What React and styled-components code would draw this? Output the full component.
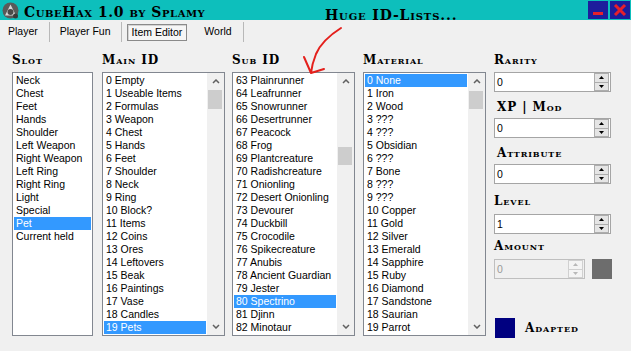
import React from "react";
import styled, { createGlobalStyle } from "styled-components";

const GlobalStyle = createGlobalStyle`
  html, body {
    margin: 0;
    padding: 0;
    background: #f0f0f0;
    overflow: hidden;
  }
`;

const slots = ["Neck", "Chest", "Feet", "Hands", "Shoulder", "Left Weapon", "Right Weapon", "Left Ring", "Right Ring", "Light", "Special", "Pet", "Current held"];

const mainIds = ["0 Empty", "1 Useable Items", "2 Formulas", "3 Weapon", "4 Chest", "5 Hands", "6 Feet", "7 Shoulder", "8 Neck", "9 Ring", "10 Block?", "11 Items", "12 Coins", "13 Ores", "14 Leftovers", "15 Beak", "16 Paintings", "17 Vase", "18 Candles", "19 Pets"];

const subIds = ["63 Plainrunner", "64 Leafrunner", "65 Snowrunner", "66 Desertrunner", "67 Peacock", "68 Frog", "69 Plantcreature", "70 Radishcreature", "71 Onionling", "72 Desert Onionling", "73 Devourer", "74 Duckbill", "75 Crocodile", "76 Spikecreature", "77 Anubis", "78 Ancient Guardian", "79 Jester", "80 Spectrino", "81 Djinn", "82 Minotaur"];

const materials = ["0 None", "1 Iron", "2 Wood", "3 ???", "4 ???", "5 Obsidian", "6 ???", "7 Bone", "8 ???", "9 ???", "10 Copper", "11 Gold", "12 Silver", "13 Emerald", "14 Sapphire", "15 Ruby", "16 Diamond", "17 Sandstone", "18 Saurian", "19 Parrot"];

const Window = styled.div`
  position: relative;
  width: 631px;
  height: 351px;
  background: #f0f0f0;
  overflow: hidden;
  font-family: "Liberation Sans", Arial, sans-serif;
  color: #000;
`;

const TitleBar = styled.div`
  display: flex;
  align-items: center;
  height: 20px;
  padding-left: 2px;
  background: #0dbfbc;
`;

const Title = styled.div`
  margin-left: 5px;
  padding-top: 4px;
  font-family: "DejaVu Serif", serif;
  font-weight: bold;
  font-variant: small-caps;
  font-size: 14px;
  letter-spacing: 0.55px;
  line-height: 16px;
`;

const WinButtons = styled.div`
  display: flex;
  gap: 2px;
  margin-left: auto;
  padding-right: 1px;
`;

const WinButton = styled.div`
  width: 20px;
  height: 18px;
  background: #1d1d9c;
  display: flex;
  align-items: center;
  justify-content: center;
`;

const TabBar = styled.div`
  display: flex;
  align-items: center;
  height: 22px;
  font-size: 10.5px;
`;

const Tab = styled.div`
  padding: 0 ${(p) => p.$pad || 11}px;
  line-height: 18px;
  &:first-child {
    padding-left: 8px;
  }
`;

const ActiveTab = styled.div`
  margin: 2px 6px 0 5px;
  padding: 0 4px;
  line-height: 15px;
  border: 1px solid #8a8a8a;
  box-shadow: inset 1px 1px 0 #d4d4d4;
  background: #f6f6f6;
`;

const Separator = styled.div`
  align-self: stretch;
  width: 1px;
  margin-top: 2px;
  background: #b8b8b8;
`;

const Content = styled.div`
  display: flex;
  padding: 11px 0 0 12px;
`;

const Column = styled.div`
  display: flex;
  flex-direction: column;
  margin-right: ${(p) => p.$gap}px;
`;

const Heading = styled.div`
  height: 14px;
  margin: 0 0 5px ${(p) => p.$indent || 0}px;
  font-family: "DejaVu Serif", serif;
  font-weight: bold;
  font-variant: small-caps;
  font-size: 12px;
  line-height: 14px;
  letter-spacing: 0.9px;
  white-space: nowrap;
`;

const ListBox = styled.div`
  display: flex;
  box-sizing: border-box;
  width: ${(p) => p.$w}px;
  height: 264px;
  border: 1px solid #828790;
  background: #fff;
`;

const Items = styled.div`
  flex: 1;
  padding: 1px;
  overflow: hidden;
  font-size: 10.5px;
`;

const Item = styled.div`
  height: 13px;
  line-height: 13px;
  padding-left: 2px;
  white-space: nowrap;
  background: ${(p) => (p.$selected ? "#3399ff" : "transparent")};
  color: ${(p) => (p.$selected ? "#fff" : "#000")};
`;

const ScrollBar = styled.div`
  display: flex;
  flex-direction: column;
  width: 17px;
  background: #f0f0f0;
`;

const ScrollArrow = styled.div`
  height: 17px;
  display: flex;
  align-items: center;
  justify-content: center;
`;

const Track = styled.div`
  flex: 1;
`;

const Thumb = styled.div`
  height: ${(p) => p.$h}px;
  margin: ${(p) => p.$top}px 2px 0 1px;
  background: #cdcdcd;
`;

const Fields = styled.div`
  display: flex;
  flex-direction: column;
`;

const FieldLabel = styled(Heading)`
  margin-top: ${(p) => p.$top || 0}px;
  margin-bottom: ${(p) => p.$bottom ?? 5}px;
`;

const SpinRow = styled.div`
  display: flex;
  gap: 7px;
`;

const SpinBox = styled.div`
  display: flex;
  box-sizing: border-box;
  width: ${(p) => p.$w}px;
  height: 20px;
  border: 1px solid ${(p) => (p.$disabled ? "#bfbfbf" : "#a5a5a5")};
  background: ${(p) => (p.$disabled ? "#f0f0f0" : "#fff")};
`;

const SpinValue = styled.div`
  flex: 1;
  padding-left: 2px;
  font-size: 10.5px;
  line-height: 18px;
  color: ${(p) => (p.$disabled ? "#9a9a9a" : "#000")};
`;

const Spinner = styled.div`
  display: flex;
  flex-direction: column;
  width: 15px;
  padding: 0 1px 0 0;
`;

const SpinButton = styled.div`
  flex: 1;
  display: flex;
  align-items: center;
  justify-content: center;
  box-sizing: border-box;
  border: 1px solid ${(p) => (p.$disabled ? "#d0d0d0" : "#adadad")};
  background: ${(p) => (p.$disabled ? "#f4f4f4" : "#e5e5e5")};
  & + & {
    border-top: none;
  }
`;

const Swatch = styled.div`
  width: 20px;
  height: 20px;
  background: ${(p) => p.$color};
`;

const AdaptedRow = styled.div`
  display: flex;
  align-items: center;
  gap: 10px;
  margin-top: 39px;
  margin-left: 1px;
`;

const AdaptedLabel = styled(Heading)`
  margin: 0;
`;

const Annotation = styled.div`
  position: absolute;
  left: 300px;
  top: 0;
  width: 170px;
  height: 80px;
  pointer-events: none;
`;

const AnnotationText = styled.div`
  position: absolute;
  left: 25px;
  top: 8px;
  font-family: "DejaVu Serif", serif;
  font-weight: bold;
  font-variant: small-caps;
  font-size: 14px;
  line-height: 14px;
  letter-spacing: 0.85px;
  white-space: nowrap;
`;

const Chevron = ({ down, color = "#606060" }) => (
  <svg width="8" height="5" viewBox="0 0 8 5">
    <polyline
      points={down ? "1,1 4,4 7,1" : "1,4 4,1 7,4"}
      fill="none"
      stroke={color}
      strokeWidth="1.5"
    />
  </svg>
);

const Triangle = ({ down, color = "#000" }) => (
  <svg width="5" height="3" viewBox="0 0 5 3">
    <polygon points={down ? "0,0 5,0 2.5,3" : "0,3 5,3 2.5,0"} fill={color} />
  </svg>
);

const AppIcon = () => (
  <svg width="17" height="17" viewBox="0 0 17 17">
    <circle cx="8.5" cy="8.5" r="8" fill="#5a5a5a" />
    <path d="M8.5 2.5 L14 13.5 L3 13.5 Z" fill="#d8d8d8" />
    <circle cx="8.5" cy="10" r="3" fill="#4a4a4a" />
    <circle cx="13.5" cy="14" r="2.5" fill="#3a3a3a" />
  </svg>
);

const List = ({ items, selected, width, thumb }) => (
  <ListBox $w={width}>
    <Items>
      {items.map((t, i) => (
        <Item key={t} $selected={i === selected}>
          {t}
        </Item>
      ))}
    </Items>
    {thumb && (
      <ScrollBar>
        <ScrollArrow>
          <Chevron />
        </ScrollArrow>
        <Track>
          <Thumb $top={thumb.top} $h={thumb.h} />
        </Track>
        <ScrollArrow>
          <Chevron down />
        </ScrollArrow>
      </ScrollBar>
    )}
  </ListBox>
);

const Spin = ({ value, width = 117, disabled }) => {
  const c = disabled ? "#b8b8b8" : "#000";
  return (
    <SpinBox $w={width} $disabled={disabled}>
      <SpinValue $disabled={disabled}>{value}</SpinValue>
      <Spinner>
        <SpinButton $disabled={disabled}>
          <Triangle color={c} />
        </SpinButton>
        <SpinButton $disabled={disabled}>
          <Triangle down color={c} />
        </SpinButton>
      </Spinner>
    </SpinBox>
  );
};

export default function App() {
  return (
    <Window>
      <GlobalStyle />
      <TitleBar>
        <AppIcon />
        <Title>CubeHax 1.0 by Splamy</Title>
        <WinButtons>
          <WinButton>
            <svg width="12" height="12" viewBox="0 0 12 12">
              <rect x="1" y="8" width="10" height="3" fill="#e8202a" />
            </svg>
          </WinButton>
          <WinButton>
            <svg width="14" height="14" viewBox="0 0 14 14">
              <path d="M2 2 L12 12 M12 2 L2 12" stroke="#e8202a" strokeWidth="3" />
            </svg>
          </WinButton>
        </WinButtons>
      </TitleBar>

      <TabBar>
        <Tab>Player</Tab>
        <Separator />
        <Tab $pad={10}>Player Fun</Tab>
        <Separator />
        <ActiveTab>Item Editor</ActiveTab>
        <Tab>World</Tab>
        <Separator />
      </TabBar>

      <Content>
        <Column $gap={9}>
          <Heading>Slot</Heading>
          <List items={slots} selected={11} width={81} />
        </Column>
        <Column $gap={7}>
          <Heading>Main ID</Heading>
          <List items={mainIds} selected={19} width={123} thumb={{ top: 0, h: 19 }} />
        </Column>
        <Column $gap={8}>
          <Heading>Sub ID</Heading>
          <List items={subIds} selected={17} width={123} thumb={{ top: 57, h: 18 }} />
        </Column>
        <Column $gap={8}>
          <Heading>Material</Heading>
          <List items={materials} selected={0} width={123} thumb={{ top: 1, h: 18 }} />
        </Column>
        <Fields>
          <FieldLabel>Rarity</FieldLabel>
          <Spin value="0" />
          <FieldLabel $indent={3} $top={8} $bottom={4}>XP | Mod</FieldLabel>
          <Spin value="0" />
          <FieldLabel $indent={3} $top={8} $bottom={4}>Attribute</FieldLabel>
          <Spin value="0" />
          <FieldLabel $top={10} $bottom={6}>Level</FieldLabel>
          <Spin value="1" />
          <FieldLabel $top={5} $bottom={6}>Amount</FieldLabel>
          <SpinRow>
            <Spin value="0" width={91} disabled />
            <Swatch $color="#6d6d6d" />
          </SpinRow>
          <AdaptedRow>
            <Swatch $color="#000080" />
            <AdaptedLabel>Adapted</AdaptedLabel>
          </AdaptedRow>
        </Fields>
      </Content>

      <Annotation>
        <AnnotationText>Huge ID-Lists...</AnnotationText>
        <svg width="170" height="80" viewBox="300 0 170 80">
          <path
            d="M341 28 Q322 40 316 54 Q312 64 311 73 M304 57 L311 73 L324 69"
            fill="none"
            stroke="#e4201c"
            strokeWidth="2"
            strokeLinecap="round"
            strokeLinejoin="round"
          />
        </svg>
      </Annotation>
    </Window>
  );
}
